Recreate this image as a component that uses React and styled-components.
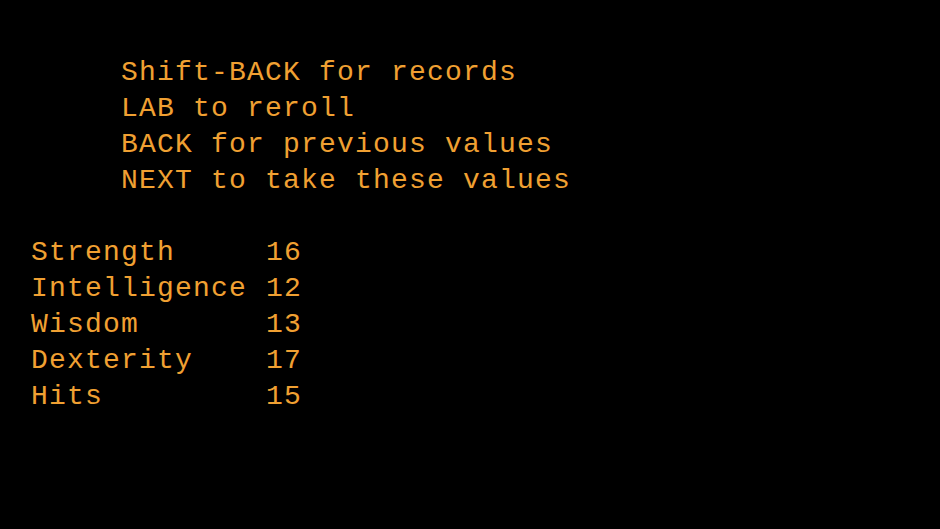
import React from 'react';
import styled, { createGlobalStyle } from "styled-components";

const GlobalStyle = createGlobalStyle`
    html, body {
        margin: 0;
        padding: 0;
        background: #000;
    }
`;

const Screen = styled.div`
    box-sizing: border-box;
    width: 940px;
    height: 529px;
    background: #000;
    color: #f0a032;
    font-family: "Liberation Mono", "DejaVu Sans Mono", monospace;
    font-size: 28px;
    letter-spacing: 1.2px;
    line-height: 36px;
    padding: 55px 0 0 31px;
    white-space: pre;
`;

const Instructions = styled.div`
    padding-left: 90px;
    margin-bottom: 36px;
`;

const Line = styled.div`
    height: 36px;
`;

const StatTable = styled.div`
    display: grid;
    grid-template-columns: 235px auto;
    justify-content: start;
`;

const StatName = styled.span``;
const StatValue = styled.span``;

const hints = [
    "Shift-BACK for records",
    "LAB to reroll",
    "BACK for previous values",
    "NEXT to take these values",
];

const stats = [
    ["Strength", 16],
    ["Intelligence", 12],
    ["Wisdom", 13],
    ["Dexterity", 17],
    ["Hits", 15],
];

const App = () => {
    return (
        <>
            <GlobalStyle />
            <Screen>
                <Instructions>
                    {hints.map(h => <Line key={h}>{h}</Line>)}
                </Instructions>
                <StatTable>
                    {stats.map(([name, value]) => (
                        <React.Fragment key={name}>
                            <StatName>{name}</StatName>
                            <StatValue>{value}</StatValue>
                        </React.Fragment>
                    ))}
                </StatTable>
            </Screen>
        </>
    )
}

export default App
